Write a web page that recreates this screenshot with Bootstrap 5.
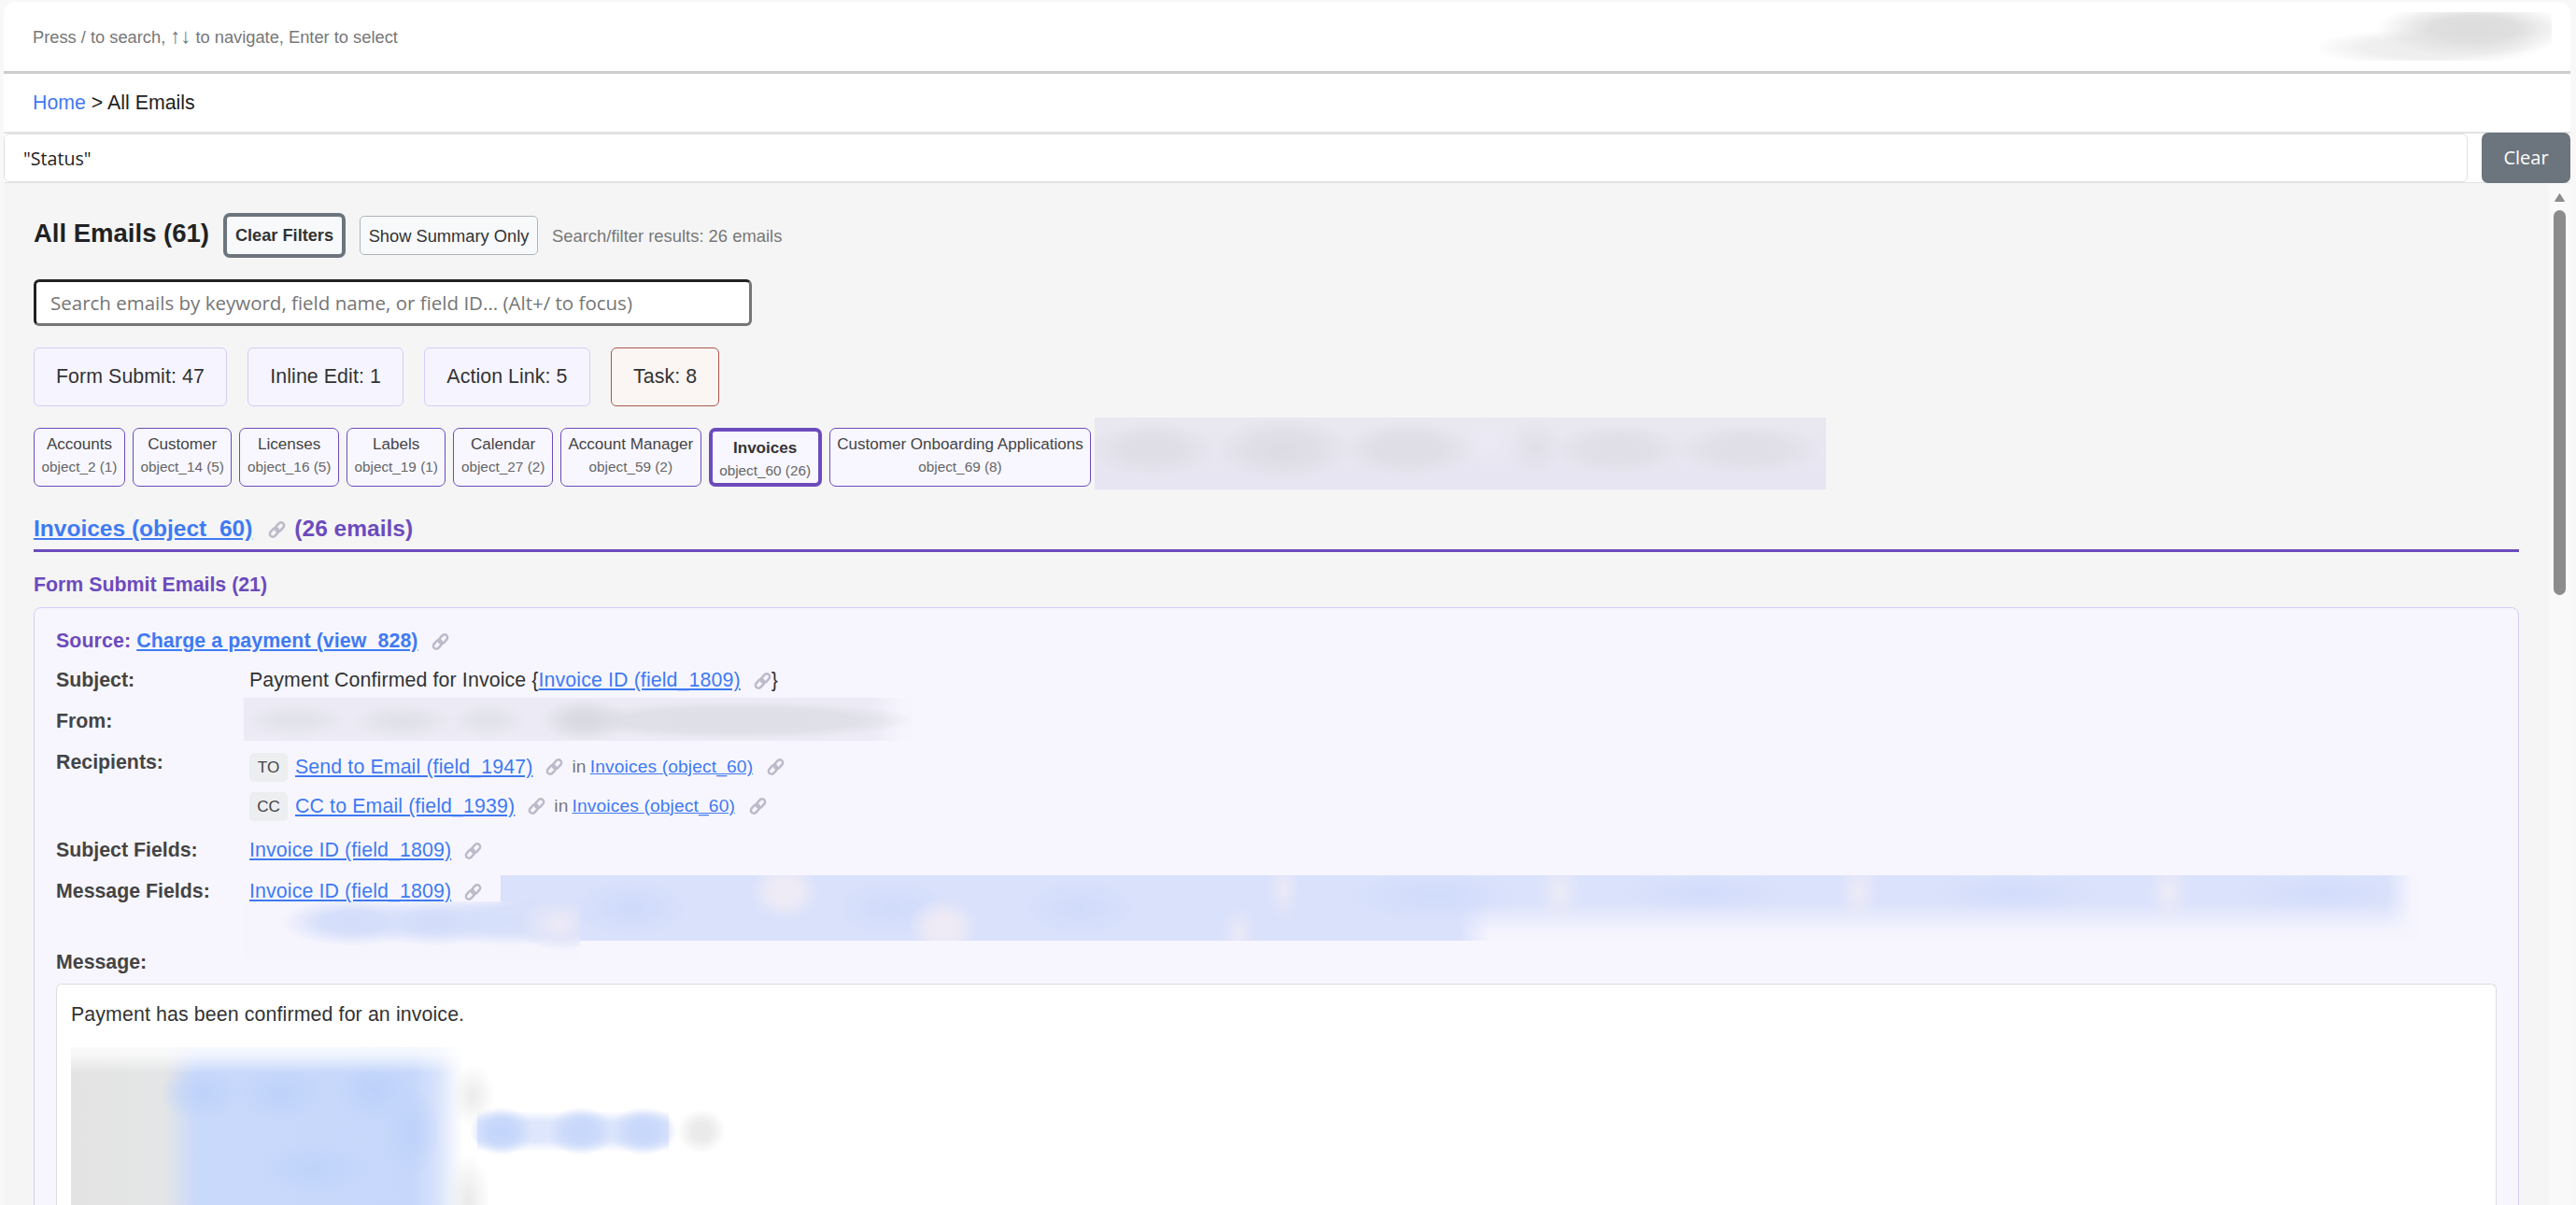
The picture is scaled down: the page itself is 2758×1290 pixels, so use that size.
<!DOCTYPE html>
<html lang="en">
<head>
<meta charset="utf-8">
<title>All Emails</title>
<link href="https://cdn.jsdelivr.net/npm/bootstrap@5.3.0/dist/css/bootstrap.min.css" rel="stylesheet">
<style>
html,body{height:100%;overflow:hidden}
body{background:#f8f8f8;font-family:"Liberation Sans",Arial,sans-serif;font-size:21.33px;line-height:32px;color:#333}
a{color:#3f7af2}
.app-frame{height:100vh;padding:2px 6px 0 4px}
.app-shell{background:#fff;border-radius:12px 12px 0 0;min-height:0}
.top-strip{height:77px;padding:0 20px 0 31px;border-bottom:3px solid #ccc;flex:none}
.hint-text{font-size:18.3px;color:#777;padding-top:1px}
.hint-arrows{font-size:22px;line-height:1}
.top-smear{width:248px;height:52px;background:
  radial-gradient(ellipse 105px 30px at 165px 18px,#dcdcdc 0,#dfdfdf 45%,rgba(255,255,255,0) 100%),
  radial-gradient(ellipse 125px 20px at 115px 38px,#eeeeee 0,#efefef 55%,rgba(255,255,255,0) 100%)}
.crumb-bar{height:64px;padding-left:31px;border-bottom:2px solid #e2e2e2;flex:none;line-height:62px;color:#222}
.crumb-bar a{text-decoration:none}
.query-row{height:53px;flex:none;border-bottom:1px solid #e2e2e2;gap:15px}
.query-input.form-control{height:52px;border:1px solid #e0e0e0;border-radius:6px;padding:0 20px;font-family:"Open Sans",sans-serif;font-size:19.6px;color:#222;flex:1}
.query-clear.btn{width:95px;height:54px;margin-top:-1px;border-radius:7px;background:#6c757d;border:0;color:#fff;font-family:"Open Sans",sans-serif;font-size:20px;padding:0;flex:none}
.body-row{min-height:0;background:#f5f5f5}
.main-pane{padding:32px 32px 0 32px;min-width:0;overflow:hidden}
.fake-scroll{width:23px;flex:none;background:#f9f9f9;padding-top:11px}
.scroll-up{width:11px;height:9px;margin:0 auto 9px}
.scroll-thumb{width:13px;height:412px;background:#8c8c8c;border-radius:7px;margin:0 auto}
.title-row{height:48px;gap:12px}
.page-title{font-size:27.5px;font-weight:700;color:#222;margin:0 3px 4px 0;line-height:40px}
.clear-filters.btn{height:48px;width:131px;padding:2px 0 0;background:#f8f9fa;border:4px solid #6c757d;border-radius:7px;font-size:18.2px;font-weight:700;color:#333;font-family:inherit}
.summary-toggle.btn{height:42px;width:191px;margin-left:3px;padding:2px 0 0;background:#f8f9fa;border:1.3px solid #adb5bd;border-radius:5px;font-size:18.3px;color:#333;font-family:inherit}
.result-note{font-size:18.4px;color:#777;margin-left:3px;padding-top:2px}
.find-input.form-control{display:block;width:769px;height:50px;margin-top:23px;border:3px solid;border-color:#222 #767676 #767676 #222;border-radius:6px;padding:0 15px;background:#fff;font-family:"Open Sans",sans-serif;font-size:20.5px}
.find-input::placeholder{color:#757575;opacity:1}
.tally-row{margin-top:23px;gap:22.5px}
.tally{height:63px;padding:0 23px;background:#f6f5ff;border:1.3px solid #d3cdf7;border-radius:6px;line-height:60px;color:#333;white-space:nowrap;letter-spacing:.08px}
.tally-task{background:#fbf5f3;border-color:#a9584e}
.tab-row{margin-top:23px;gap:8px;height:63px}
.obj-tab{height:63px;padding:5px 7.5px 0;background:#f8f7ff;border:1.4px solid #6c4bbd;border-radius:7px;text-align:center;font-size:17.07px;line-height:24px;color:#444;white-space:nowrap}
.obj-tab span{display:block;font-size:15.33px;color:#666}
.obj-tab-on{border-width:4px;padding:6px 7.5px 0;font-weight:700;color:#333}
.obj-tab-on span{font-weight:400}
.tab-smear{margin:-11px 0 0 -4px;width:783px;height:77px;flex:none;background:
  radial-gradient(ellipse 70px 30px at 62px 34px,#dfdee6 0,#e0dfe7 45%,rgba(224,223,231,0) 100%),
  radial-gradient(ellipse 74px 34px at 202px 34px,#dcdbe3 0,#e0dfe7 50%,rgba(224,223,231,0) 100%),
  radial-gradient(ellipse 72px 30px at 336px 34px,#dedde5 0,#e0dfe7 50%,rgba(224,223,231,0) 100%),
  radial-gradient(ellipse 30px 30px at 423px 24px,#ebeaf4 0,rgba(235,234,244,0) 100%),
  radial-gradient(ellipse 30px 30px at 472px 32px,#e0dfe7 0,rgba(224,223,231,0) 100%),
  radial-gradient(ellipse 72px 28px at 560px 34px,#e0dfe7 0,#e1e0e8 50%,rgba(224,223,231,0) 100%),
  radial-gradient(ellipse 80px 28px at 700px 34px,#e0dfe7 0,#e1e0e8 50%,rgba(224,223,231,0) 100%),
  linear-gradient(#e9e8f0 0,#e8e6f1 60%,#e7e5f2 100%)}
.section-head{margin-top:26px;height:44px;border-bottom:3px solid #6c4bbd;font-size:24.53px;line-height:37px;font-weight:700;color:#6c4bbd}
.section-head .chain{margin:0 9px 0 17px;vertical-align:-3px}
.group-head{margin-top:19px;font-weight:700;color:#6c4bbd;margin-bottom:8px}
.mail-panel{background:#f7f6ff;border:1.3px solid #d3cdf7;border-radius:8px;padding:19px 23px 0}
.source-line{font-weight:700;color:#6c4bbd;margin-bottom:10px;letter-spacing:.1px}
.chain{width:19px;height:20px;vertical-align:-4px;margin-left:14px}
.field-row{display:flex;margin-bottom:12px}
.field-key{width:207px;flex:none;font-weight:700;color:#444}
.field-val{min-width:0;flex:1;letter-spacing:.12px}
.from-val{position:relative;height:32px}
.from-smear{position:absolute;left:-6px;top:-9px;width:715px;height:46px;background:
  radial-gradient(ellipse 55px 19px at 55px 24px,#e2e2ea 0,#e4e4ec 40%,rgba(226,226,234,0) 100%),
  radial-gradient(ellipse 55px 19px at 170px 25px,#e0e0e8 0,#e3e3eb 40%,rgba(224,224,232,0) 100%),
  radial-gradient(ellipse 40px 19px at 262px 24px,#e2e2ea 0,#e4e4ec 40%,rgba(226,226,234,0) 100%),
  radial-gradient(ellipse 48px 23px at 365px 24px,#d8d8e0 0,#dcdce4 40%,rgba(216,216,224,0) 100%),
  radial-gradient(ellipse 190px 20px at 530px 24px,#dfdfe7 0,#e0e0e8 65%,rgba(223,223,231,0) 100%),
  linear-gradient(to right,#ecebf5 0,#ecebf5 670px,#f6f5fe 705px)}
.mail-line{display:flex;align-items:center;height:38px;margin-top:2px}
.mail-line + .mail-line{margin-top:4px}
.kind-tag{width:41px;height:31px;background:#eceef0;border-radius:5px;font-size:17.07px;line-height:31px;text-align:center;color:#444;margin-right:8px;flex:none;letter-spacing:0}
.in-note{font-size:19.2px;color:#777;margin-left:9px;letter-spacing:.14px}
.in-note a{margin-left:4px}
.in-note .chain{margin-left:15px}
.msgf-val{position:relative;height:64px}
.msgf-line{position:relative;z-index:1}
.msg-smear-a{position:absolute;left:269px;top:-1px;width:2054px;height:70px;background:
  radial-gradient(ellipse 38px 32px at 304px 17px,#eeebf6 0,#edeaf6 40%,rgba(237,234,246,0) 100%),
  radial-gradient(ellipse 38px 32px at 474px 56px,#eeebf6 0,#edeaf6 40%,rgba(237,234,246,0) 100%),
  radial-gradient(ellipse 18px 36px at 838px 14px,#ebe9f7 0,rgba(235,233,247,0) 100%),
  radial-gradient(ellipse 20px 30px at 790px 62px,#ebe9f7 0,rgba(235,233,247,0) 100%),
  radial-gradient(ellipse 22px 38px at 1134px 18px,#ecebf7 0,rgba(236,235,247,0) 100%),
  radial-gradient(ellipse 22px 38px at 1454px 18px,#ecebf7 0,rgba(236,235,247,0) 100%),
  radial-gradient(ellipse 22px 38px at 1786px 18px,#edebf7 0,rgba(237,235,247,0) 100%),
  radial-gradient(ellipse 60px 30px at 140px 35px,#ced9fb 0,rgba(206,217,251,0) 100%),
  radial-gradient(ellipse 60px 30px at 420px 35px,#d0dbfb 0,rgba(208,219,251,0) 100%),
  radial-gradient(ellipse 60px 30px at 620px 35px,#d0dbfb 0,rgba(208,219,251,0) 100%),
  radial-gradient(ellipse 90px 26px at 1000px 22px,#d0dbfb 0,rgba(208,219,251,0) 100%),
  radial-gradient(ellipse 90px 22px at 1290px 18px,#d2dcfb 0,rgba(210,220,251,0) 100%),
  radial-gradient(ellipse 90px 22px at 1620px 18px,#d2dcfb 0,rgba(210,220,251,0) 100%),
  radial-gradient(ellipse 90px 22px at 1950px 18px,#d2dcfb 0,rgba(210,220,251,0) 100%),
  linear-gradient(to right,rgba(246,245,254,0) 2020px,#f6f5fe 2048px),
  linear-gradient(to right,#d9e1fb 0,#d9e1fb 1025px,rgba(217,225,251,0) 1060px),
  linear-gradient(#dbe2fb 0,#dbe2fb 30px,#f6f5fe 62px)}
.msg-smear-b{position:absolute;left:-6px;top:27px;width:360px;height:61px;background:
  radial-gradient(ellipse 40px 30px at 338px 24px,#edeaf6 0,rgba(237,234,246,0) 100%),
  radial-gradient(ellipse 78px 26px at 118px 22px,#d3ddfa 0,#d6dffa 45%,rgba(214,223,250,0) 100%),
  radial-gradient(ellipse 78px 26px at 205px 22px,#d1dcfa 0,#d6dffa 45%,rgba(214,223,250,0) 100%),
  radial-gradient(ellipse 78px 28px at 280px 20px,#d6dffa 0,#d9e1fa 50%,rgba(214,223,250,0) 100%),
  radial-gradient(ellipse 70px 44px at 340px 8px,#d6dffa 0,#d6dffa 65%,rgba(214,223,250,0) 100%),
  #f6f5fe}
.msg-head{font-weight:700;color:#444;margin-top:1px;margin-bottom:7px}
.msg-box{background:#fff;border:1.3px solid #ddd;border-bottom:0;border-radius:6px 6px 0 0;padding:16px 15px 0;height:400px;color:#333;letter-spacing:.12px}
.msg-smear{margin-top:19px;width:720px;height:180px;background:
  radial-gradient(ellipse 26px 24px at 675px 90px,#e9e9e9 0,#ebebeb 40%,rgba(235,235,235,0) 100%),
  radial-gradient(ellipse 34px 26px at 461px 90px,#c2d4fb 0,#c9d9fb 50%,rgba(201,217,251,0) 100%),
  radial-gradient(ellipse 36px 26px at 546px 90px,#c6d7fb 0,#ccdafb 50%,rgba(204,218,251,0) 100%),
  radial-gradient(ellipse 36px 26px at 613px 90px,#c6d7fb 0,#ccdafb 50%,rgba(204,218,251,0) 100%),
  linear-gradient(to bottom,rgba(255,255,255,0) 68px,rgba(218,228,252,.9) 80px,rgba(218,228,252,.9) 100px,rgba(255,255,255,0) 112px) 435px 0/205px 100% no-repeat,
  radial-gradient(ellipse 24px 34px at 430px 52px,#ebebeb 0,rgba(235,235,235,0) 100%),
  radial-gradient(ellipse 24px 52px at 425px 165px,#e9e9e9 0,rgba(233,233,233,0) 100%),
  linear-gradient(to bottom,rgba(255,255,255,.82) 0,rgba(255,255,255,.72) 8px,rgba(255,255,255,0) 28px),
  radial-gradient(ellipse 45px 30px at 140px 50px,#bed2fa 0,rgba(190,210,250,0) 100%),
  radial-gradient(ellipse 50px 30px at 225px 50px,#bed2fa 0,rgba(190,210,250,0) 100%),
  radial-gradient(ellipse 40px 34px at 325px 46px,#bcd1fa 0,rgba(188,209,250,0) 100%),
  radial-gradient(ellipse 30px 50px at 365px 90px,#bed2fa 0,rgba(190,210,250,0) 100%),
  radial-gradient(ellipse 60px 28px at 260px 130px,#bfd3fa 0,rgba(191,211,250,0) 100%),
  linear-gradient(to right,#e3e3e3 0,#e4e5e6 100px,#c9d9fb 135px,#c6d7fb 365px,#d8e3fb 392px,rgba(255,255,255,0) 420px)}
</style>
</head>
<body>
<svg width="0" height="0" class="d-block" aria-hidden="true">
<defs>
<symbol id="chainlink" viewBox="0 0 20 20">
<g fill="none" stroke="#bdb9c9" stroke-width="2.6">
<rect x="1.2" y="9.6" width="11.4" height="6.8" rx="3.4" transform="rotate(-48 6.9 13)"/>
<rect x="7.4" y="3.6" width="11.4" height="6.8" rx="3.4" transform="rotate(-48 13.1 7)"/>
</g>
</symbol>
</defs>
</svg>
<div class="app-frame">
<div class="app-shell h-100 d-flex flex-column">
  <div class="top-strip d-flex align-items-center justify-content-between">
    <div class="hint-text">Press / to search, <span class="hint-arrows">↑↓</span> to navigate, Enter to select</div>
    <div class="top-smear"></div>
  </div>
  <div class="crumb-bar"><a href="#">Home</a> &gt; All Emails</div>
  <div class="query-row d-flex">
    <input class="query-input form-control" value="&quot;Status&quot;" aria-label="Filter">
    <button class="query-clear btn" type="button">Clear</button>
  </div>
  <div class="body-row d-flex flex-grow-1">
    <div class="main-pane flex-grow-1">
      <div class="title-row d-flex align-items-center">
        <h2 class="page-title">All Emails (61)</h2>
        <button class="clear-filters btn" type="button">Clear Filters</button>
        <button class="summary-toggle btn" type="button">Show Summary Only</button>
        <span class="result-note">Search/filter results: 26 emails</span>
      </div>
      <input class="find-input form-control" placeholder="Search emails by keyword, field name, or field ID... (Alt+/ to focus)" aria-label="Search">
      <div class="tally-row d-flex">
        <div class="tally">Form Submit: 47</div>
        <div class="tally">Inline Edit: 1</div>
        <div class="tally">Action Link: 5</div>
        <div class="tally tally-task">Task: 8</div>
      </div>
      <div class="tab-row d-flex">
        <div class="obj-tab">Accounts<span>object_2 (1)</span></div>
        <div class="obj-tab">Customer<span>object_14 (5)</span></div>
        <div class="obj-tab">Licenses<span>object_16 (5)</span></div>
        <div class="obj-tab">Labels<span>object_19 (1)</span></div>
        <div class="obj-tab">Calendar<span>object_27 (2)</span></div>
        <div class="obj-tab">Account Manager<span>object_59 (2)</span></div>
        <div class="obj-tab obj-tab-on">Invoices<span>object_60 (26)</span></div>
        <div class="obj-tab">Customer Onboarding Applications<span>object_69 (8)</span></div>
        <div class="tab-smear"></div>
      </div>
      <div class="section-head"><a href="#">Invoices (object_60)</a><svg class="chain"><use href="#chainlink"/></svg>(26 emails)</div>
      <div class="group-head">Form Submit Emails (21)</div>
      <div class="mail-panel">
        <div class="source-line">Source: <a href="#">Charge a payment (view_828)</a><svg class="chain"><use href="#chainlink"/></svg></div>
        <div class="field-row"><div class="field-key">Subject:</div><div class="field-val">Payment Confirmed for Invoice {<a href="#">Invoice ID (field_1809)</a><svg class="chain"><use href="#chainlink"/></svg>}</div></div>
        <div class="field-row"><div class="field-key">From:</div><div class="field-val from-val"><div class="from-smear"></div></div></div>
        <div class="field-row"><div class="field-key">Recipients:</div><div class="field-val">
          <div class="mail-line"><span class="kind-tag">TO</span><a href="#">Send to Email (field_1947)</a><svg class="chain"><use href="#chainlink"/></svg><span class="in-note">in<a href="#">Invoices (object_60)</a><svg class="chain"><use href="#chainlink"/></svg></span></div>
          <div class="mail-line"><span class="kind-tag">CC</span><a href="#">CC to Email (field_1939)</a><svg class="chain"><use href="#chainlink"/></svg><span class="in-note">in<a href="#">Invoices (object_60)</a><svg class="chain"><use href="#chainlink"/></svg></span></div>
        </div></div>
        <div class="field-row"><div class="field-key">Subject Fields:</div><div class="field-val"><a href="#">Invoice ID (field_1809)</a><svg class="chain"><use href="#chainlink"/></svg></div></div>
        <div class="field-row"><div class="field-key">Message Fields:</div><div class="field-val msgf-val">
          <div class="msg-smear-a"></div>
          <div class="msg-smear-b"></div>
          <div class="msgf-line"><a href="#">Invoice ID (field_1809)</a><svg class="chain"><use href="#chainlink"/></svg></div>
        </div></div>
        <div class="msg-head">Message:</div>
        <div class="msg-box">
          <div>Payment has been confirmed for an invoice.</div>
          <div class="msg-smear"></div>
        </div>
      </div>
    </div>
    <div class="fake-scroll">
      <svg class="scroll-up d-block" viewBox="0 0 11 9" aria-hidden="true"><path d="M5.5 0.5 L10.5 8.5 L0.5 8.5 Z" fill="#8c8c8c" stroke="#8c8c8c" stroke-linejoin="round"/></svg>
      <div class="scroll-thumb"></div>
    </div>
  </div>
</div>
</div>
<script src="https://cdn.jsdelivr.net/npm/bootstrap@5.3.0/dist/js/bootstrap.bundle.min.js"></script>
</body>
</html>
